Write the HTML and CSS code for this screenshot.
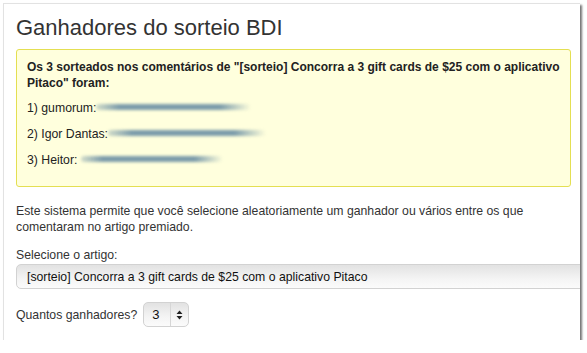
FILE: index.html
```html
<!DOCTYPE html>
<html lang="pt-BR">
<head>
    <meta charset="UTF-8">
    <title>Ganhadores do sorteio BDI</title>
    <link rel="stylesheet" href="styles.css">
</head>
<body>
    <div class="panel">
        <h1>Ganhadores do sorteio BDI</h1>

        <div class="result">
            <p class="result-title">Os 3 sorteados nos comentários de "[sorteio] Concorra a 3 gift cards de $25 com o aplicativo Pitaco" foram:</p>
            <p>1) gumorum:<span class="hidden-mail w1"></span></p>
            <p>2) Igor Dantas:<span class="hidden-mail w2"></span></p>
            <p>3) Heitor: <span class="hidden-mail w3"></span></p>
        </div>

        <p class="intro">Este sistema permite que você selecione aleatoriamente um ganhador ou vários entre os que comentaram no artigo premiado.</p>

        <label class="field-label" for="artigo">Selecione o artigo:</label>
        <select id="artigo" class="select-wide">
            <option>[sorteio] Concorra a 3 gift cards de $25 com o aplicativo Pitaco</option>
        </select>

        <div class="count-row">
            <label for="quantos">Quantos ganhadores?</label>
            <span class="select-small">
                <select id="quantos">
                    <option>1</option>
                    <option>2</option>
                    <option selected>3</option>
                </select>
                <span class="arrows">
                    <svg width="7" height="10" viewBox="0 0 7 10"><path d="M3.5 0.5 L6.5 4 H0.5 Z M3.5 9.5 L6.5 6 H0.5 Z" fill="#222"/></svg>
                </span>
            </span>
        </div>
    </div>
</body>
</html>
```

FILE: styles.css
```css
body {
    margin: 0;
    background-color: #fff;
    font-family: Helvetica, "Liberation Sans", Arial, sans-serif;
    color: #333;
}
.panel {
    margin: 3px 0 0 3px;
    width: 577px;
    height: 337px;
    border-top: 1px solid #e2e2e2;
    border-left: 1px solid #e2e2e2;
    background-color: #fff;
    box-shadow: 2px 2px 2px rgba(0, 0, 0, 0.55);
    padding: 0 0 0 12px;
    box-sizing: border-box;
    overflow: hidden;
}
.panel h1 {
    margin: 0;
    padding-top: 10px;
    font-size: 22px;
    font-weight: normal;
    line-height: 28px;
    color: #333;
}
.result {
    margin-top: 7px;
    width: 555px;
    box-sizing: border-box;
    padding: 9px 10px 5px 10px;
    background-color: #ffffdd;
    border: 1px solid #e4df52;
    border-radius: 3px;
    font-size: 12.25px;
    color: #222;
}
.result p {
    margin: 0 0 9px 0;
    line-height: 17px;
}
.result p:last-child {
    margin-bottom: 12px;
}
.result .result-title {
    font-weight: bold;
    font-size: 12px;
    line-height: 16px;
    margin-bottom: 9px;
}
.hidden-mail {
    display: inline-block;
    height: 6px;
    vertical-align: 2px;
    background: linear-gradient(90deg, rgba(110, 145, 160, 0.3), #7c9caa 15%, #7c9caa 80%, rgba(110, 145, 160, 0));
    filter: blur(1.4px);
    border-radius: 3px;
}
.w1 { width: 155px; }
.w2 { width: 158px; }
.w3 { width: 142px; }
.intro {
    margin: 16px 0 0 0;
    font-size: 12.25px;
    line-height: 16px;
    color: #333;
    width: 540px;
}
.field-label {
    display: block;
    margin-top: 12px;
    font-size: 12.25px;
    line-height: 17px;
}
.select-wide {
    display: block;
    -webkit-appearance: none;
    appearance: none;
    margin-top: 0;
    width: 620px;
    height: 25px;
    padding: 0 10px;
    border: 1px solid #d2d2d2;
    border-radius: 5px;
    background: linear-gradient(#e2e2e2, #f4f4f4 60%, #fbfbfb);
    font-family: inherit;
    font-size: 12.25px;
    color: #111;
    outline: none;
}
.count-row {
    display: flex;
    align-items: center;
    margin-top: 13px;
    font-size: 12.25px;
}
.count-row label {
    margin-right: 6px;
}
.select-small {
    display: inline-flex;
    align-items: stretch;
    height: 23px;
    border: 1px solid #d2d2d2;
    border-radius: 5px;
    background: linear-gradient(#e2e2e2, #f4f4f4 60%, #fbfbfb);
    overflow: hidden;
}
.select-small select {
    -webkit-appearance: none;
    appearance: none;
    border: none;
    background: transparent;
    width: 26px;
    padding: 0 0 0 8px;
    font-family: inherit;
    font-size: 13px;
    color: #111;
    outline: none;
}
.arrows {
    display: flex;
    align-items: center;
    justify-content: center;
    width: 17px;
    border-left: 1px solid #d6d6d6;
}
```
